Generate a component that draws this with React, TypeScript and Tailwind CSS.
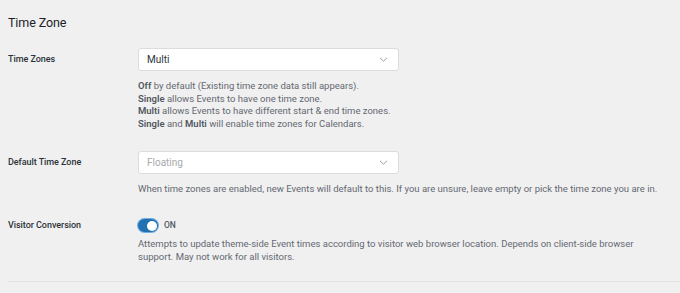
import React from 'react';

function Chevron() {
  return (
    <svg width="9" height="5" viewBox="0 0 9 5" fill="none" className="text-[#8c8f94]">
      <path d="M1 0.8l3.5 3.4 3.5-3.4" stroke="currentColor" strokeWidth="0.9" />
    </svg>
  );
}

function Select({ value, muted }: { value: string; muted?: boolean }) {
  return (
    <div className="flex items-center justify-between w-[261px] h-[23px] bg-white border border-[#dcdcde] rounded-[3px] pl-[8px] pr-[10px]">
      <span className={`text-[10px] ${muted ? 'text-[#a7aaad]' : 'text-[#2c3338]'}`}>{value}</span>
      <Chevron />
    </div>
  );
}

function Desc({ children }: { children: React.ReactNode }) {
  return <div className="text-[9.5px] leading-[12.5px] text-[#646970] whitespace-nowrap">{children}</div>;
}

function B({ children }: { children: React.ReactNode }) {
  return <b className="font-semibold text-[#50575e]">{children}</b>;
}

const label = 'flex items-center text-[9px] font-medium tracking-[-0.05px] text-[#2c3338]';

export default function App() {
  return (
    <div
      className="w-[680px] h-[293px] bg-[#f0f0f1] overflow-hidden pl-[8px]"
      style={{ fontFamily: 'Roboto, "Noto Sans", sans-serif' }}
    >
      <h2 className="pt-[14px] text-[12.5px] leading-[18px] tracking-[-0.1px] text-[#1d2327]">Time Zone</h2>

      <div className="grid grid-cols-[130px_1fr] mt-[16px]">
        <div className={`h-[23px] ${label}`}>Time Zones</div>
        <div>
          <Select value="Multi" />
          <div className="mt-[9px]">
            <Desc>
              <B>Off</B> by default (Existing time zone data still appears).
            </Desc>
            <Desc>
              <B>Single</B> allows Events to have one time zone.
            </Desc>
            <Desc>
              <B>Multi</B> allows Events to have different start &amp; end time zones.
            </Desc>
            <Desc>
              <B>Single</B> and <B>Multi</B> will enable time zones for Calendars.
            </Desc>
          </div>
        </div>

        <div className={`h-[23px] mt-[21px] ${label}`}>Default Time Zone</div>
        <div className="mt-[21px]">
          <Select value="Floating" muted />
          <div className="mt-[9px]">
            <Desc>
              When time zones are enabled, new Events will default to this. If you are unsure, leave empty or pick the time zone you are in.
            </Desc>
          </div>
        </div>

        <div className={`h-[14px] mt-[23px] ${label}`}>Visitor Conversion</div>
        <div className="mt-[23px]">
          <div className="flex items-center gap-[6px] h-[14px]">
            <div className="w-[20px] h-[13px] rounded-full bg-[#2271b1] ring-1 ring-[#72aee6] flex items-center justify-end pr-[1.5px]">
              <div className="w-[10px] h-[10px] rounded-full bg-white" />
            </div>
            <span className="text-[8.5px] font-medium text-[#50575e]">ON</span>
          </div>
          <div className="mt-[5px]">
            <Desc>Attempts to update theme-side Event times according to visitor web browser location. Depends on client-side browser</Desc>
            <div className="mt-[0.5px]">
              <Desc>support. May not work for all visitors.</Desc>
            </div>
          </div>
        </div>
      </div>

      <div className="mt-[18px] border-t border-[#e4e4e5]" />
    </div>
  );
}
